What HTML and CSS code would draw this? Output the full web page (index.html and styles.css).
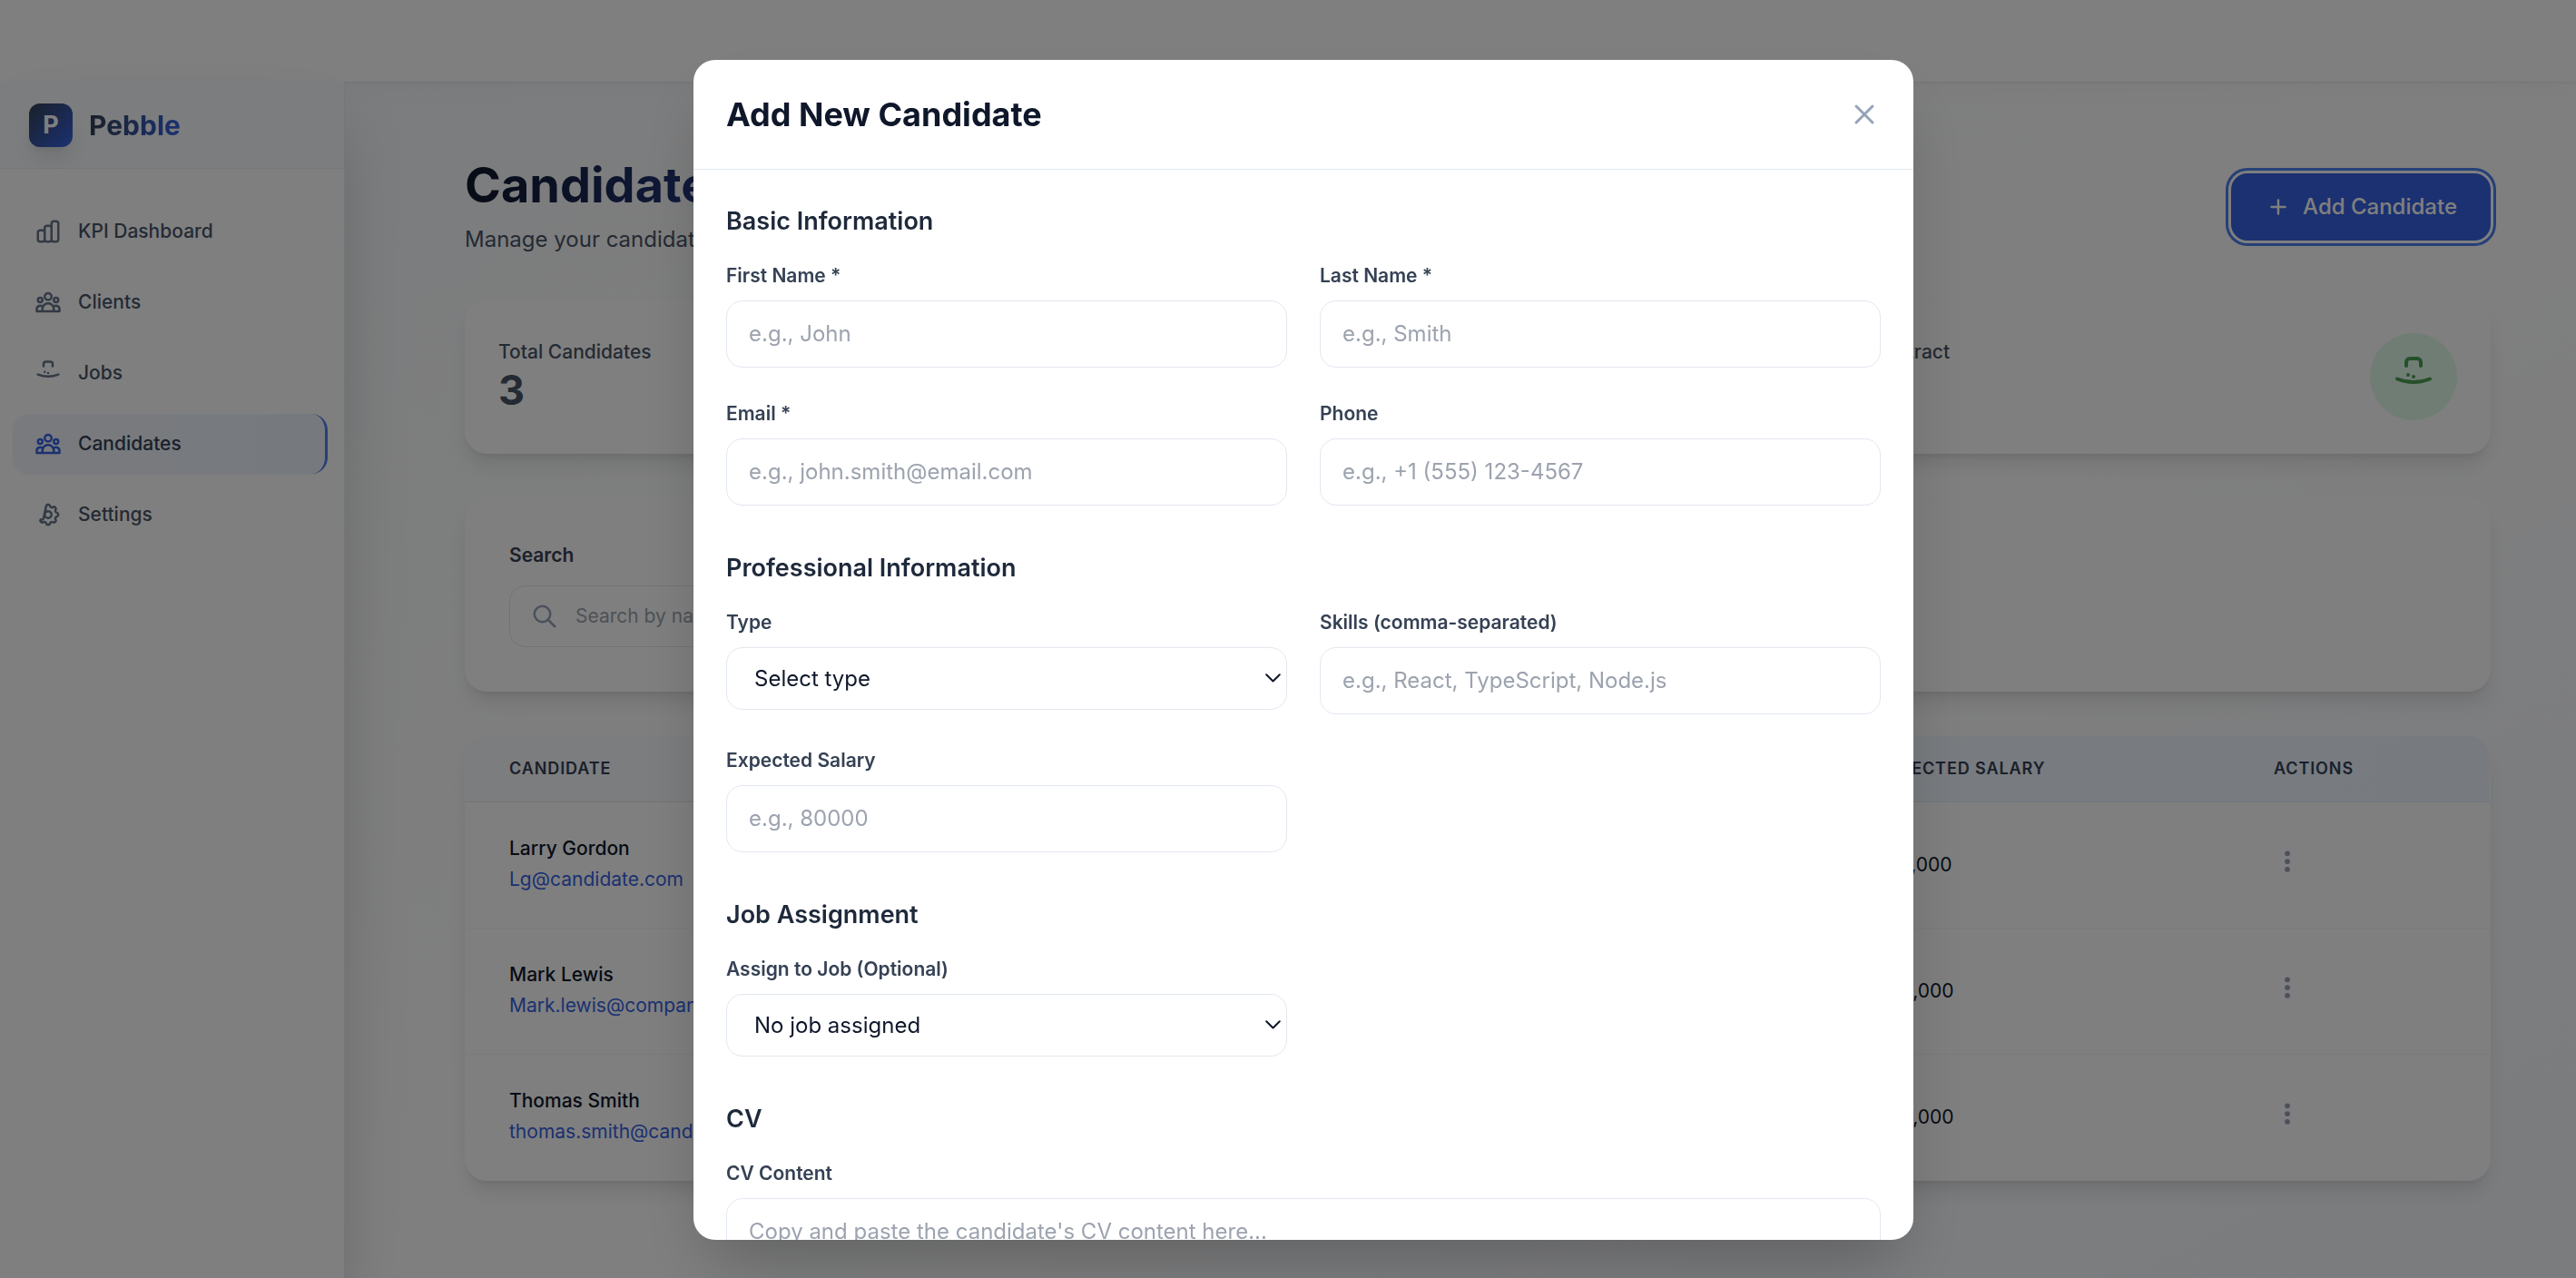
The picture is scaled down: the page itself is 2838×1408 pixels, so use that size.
FILE: index.html
```
<!DOCTYPE html>
<html lang="en">
<head>
  <meta charset="UTF-8">
  <meta name="viewport" content="width=device-width, initial-scale=1.0">
  <title>Pebble - Candidates</title>
  <link rel="stylesheet" href="styles.css">
</head>
<body>
  <header class="topbar"></header>

  <div class="layout">
    <aside class="sidebar">
      <div class="brand">
        <div class="brand-logo">P</div>
        <span class="brand-name">Pebble</span>
      </div>
      <nav class="nav">
        <a class="nav-item">
          <svg class="icon" viewBox="0 0 24 24"><path d="M9 19v-6a2 2 0 00-2-2H5a2 2 0 00-2 2v6a2 2 0 002 2h2a2 2 0 002-2zm0 0V9a2 2 0 012-2h2a2 2 0 012 2v10m-6 0a2 2 0 002 2h2a2 2 0 002-2m0 0V5a2 2 0 012-2h2a2 2 0 012 2v14a2 2 0 01-2 2h-2a2 2 0 01-2-2z"/></svg>
          KPI Dashboard
        </a>
        <a class="nav-item">
          <svg class="icon" viewBox="0 0 24 24"><path d="M17 20h5v-2a3 3 0 00-5.356-1.857M17 20H7m10 0v-2c0-.656-.126-1.283-.356-1.857M7 20H2v-2a3 3 0 015.356-1.857M7 20v-2c0-.656.126-1.283.356-1.857m0 0a5.002 5.002 0 019.288 0M15 7a3 3 0 11-6 0 3 3 0 016 0zm6 3a2 2 0 11-4 0 2 2 0 014 0zM7 10a2 2 0 11-4 0 2 2 0 014 0z"/></svg>
          Clients
        </a>
        <a class="nav-item">
          <svg class="icon" viewBox="0 0 24 24"><path d="M21 13.255A23.931 23.931 0 0112 15c-3.183 0-6.22-.62-9-1.745M16 6V4a2 2 0 00-2-2h-4a2 2 0 00-2 2v2m4 6h.01M9 11h.01"/></svg>
          Jobs
        </a>
        <a class="nav-item active">
          <svg class="icon" viewBox="0 0 24 24"><path d="M17 20h5v-2a3 3 0 00-5.356-1.857M17 20H7m10 0v-2c0-.656-.126-1.283-.356-1.857M7 20H2v-2a3 3 0 015.356-1.857M7 20v-2c0-.656.126-1.283.356-1.857m0 0a5.002 5.002 0 019.288 0M15 7a3 3 0 11-6 0 3 3 0 016 0zm6 3a2 2 0 11-4 0 2 2 0 014 0zM7 10a2 2 0 11-4 0 2 2 0 014 0z"/></svg>
          Candidates
        </a>
        <a class="nav-item">
          <svg class="icon" viewBox="0 0 24 24"><path d="M10.325 4.317c.426-1.756 2.924-1.756 3.35 0a1.724 1.724 0 002.573 1.066c1.543-.94 3.31.826 2.37 2.37a1.724 1.724 0 001.065 2.572c1.756.426 1.756 2.924 0 3.35a1.724 1.724 0 00-1.066 2.573c.94 1.543-.826 3.31-2.37 2.37a1.724 1.724 0 00-2.572 1.065c-.426 1.756-2.924 1.756-3.35 0a1.724 1.724 0 00-2.573-1.066c-1.543.94-3.31-.826-2.37-2.37a1.724 1.724 0 002.572-1.065z"/><path d="M15 12a3 3 0 11-6 0 3 3 0 016 0z"/></svg>
          Settings
        </a>
      </nav>
    </aside>

    <main class="main">
      <div class="page-header">
        <div>
          <h1 class="page-title">Candidates</h1>
          <p class="page-subtitle">Manage your candidate pipeline and assignments</p>
        </div>
        <button type="button" class="add-button">
          <svg class="icon" viewBox="0 0 24 24"><path d="M12 6v12M6 12h12"/></svg>
          Add Candidate
        </button>
      </div>

      <div class="stats">
        <div class="card stat">
          <div>
            <div class="stat-label">Total Candidates</div>
            <div class="stat-value">3</div>
          </div>
        </div>
        <div class="card stat">
          <div>
            <div class="stat-label">Permanent</div>
            <div class="stat-value">2</div>
          </div>
        </div>
        <div class="card stat">
          <div>
            <div class="stat-label">Contract</div>
            <div class="stat-value">1</div>
          </div>
          <div class="stat-icon">
            <svg viewBox="0 0 24 24"><path d="M21 13.255A23.931 23.931 0 0112 15c-3.183 0-6.22-.62-9-1.745M16 6V4a2 2 0 00-2-2h-4a2 2 0 00-2 2v2m4 6h.01M9 11h.01"/></svg>
          </div>
        </div>
      </div>

      <div class="card filters">
        <div class="filter-label">Search</div>
        <div class="search-box">
          <svg class="icon" viewBox="0 0 24 24"><path d="M21 21l-6-6m2-5a7 7 0 11-14 0 7 7 0 0114 0z"/></svg>
          <span>Search by name, email, or skills...</span>
        </div>
      </div>

      <div class="card table-card">
        <div class="row head">
          <div>Candidate</div>
          <div>Expected Salary</div>
          <div>Actions</div>
        </div>
        <div class="row">
          <div>
            <div class="name">Larry Gordon</div>
            <div class="email">Lg@candidate.com</div>
          </div>
          <div class="salary">$75,000</div>
          <div class="dots"><svg class="icon" viewBox="0 0 24 24"><path d="M12 5v.01M12 12v.01M12 19v.01M12 6a1 1 0 110-2 1 1 0 010 2zm0 7a1 1 0 110-2 1 1 0 010 2zm0 7a1 1 0 110-2 1 1 0 010 2z"/></svg></div>
        </div>
        <div class="row">
          <div>
            <div class="name">Mark Lewis</div>
            <div class="email">Mark.lewis@company.com</div>
          </div>
          <div class="salary">$80,000</div>
          <div class="dots"><svg class="icon" viewBox="0 0 24 24"><path d="M12 5v.01M12 12v.01M12 19v.01M12 6a1 1 0 110-2 1 1 0 010 2zm0 7a1 1 0 110-2 1 1 0 010 2zm0 7a1 1 0 110-2 1 1 0 010 2z"/></svg></div>
        </div>
        <div class="row">
          <div>
            <div class="name">Thomas Smith</div>
            <div class="email">thomas.smith@candidate.com</div>
          </div>
          <div class="salary">$90,000</div>
          <div class="dots"><svg class="icon" viewBox="0 0 24 24"><path d="M12 5v.01M12 12v.01M12 19v.01M12 6a1 1 0 110-2 1 1 0 010 2zm0 7a1 1 0 110-2 1 1 0 010 2zm0 7a1 1 0 110-2 1 1 0 010 2z"/></svg></div>
        </div>
      </div>
    </main>
  </div>

  <div class="overlay">
    <div class="modal">
      <div class="modal-header">
        <h2 class="modal-title">Add New Candidate</h2>
        <svg class="close" viewBox="0 0 24 24"><path d="M6 18L18 6M6 6l12 12"/></svg>
      </div>
      <form class="modal-body">
        <section>
          <h3>Basic Information</h3>
          <div class="fields">
            <label>First Name *<input type="text" placeholder="e.g., John"></label>
            <label>Last Name *<input type="text" placeholder="e.g., Smith"></label>
            <label>Email *<input type="text" placeholder="e.g., john.smith@email.com"></label>
            <label>Phone<input type="text" placeholder="e.g., +1 (555) 123-4567"></label>
          </div>
        </section>
        <section>
          <h3>Professional Information</h3>
          <div class="fields">
            <label>Type
              <span class="select-wrap">
                <select><option>Select type</option></select>
                <svg viewBox="0 0 17 10"><path d="M1.2 1.2l7.3 7.3 7.3-7.3"/></svg>
              </span>
            </label>
            <label>Skills (comma-separated)<input type="text" placeholder="e.g., React, TypeScript, Node.js"></label>
            <label>Expected Salary<input type="text" placeholder="e.g., 80000"></label>
          </div>
        </section>
        <section>
          <h3>Job Assignment</h3>
          <div class="fields">
            <label>Assign to Job (Optional)
              <span class="select-wrap">
                <select><option>No job assigned</option></select>
                <svg viewBox="0 0 17 10"><path d="M1.2 1.2l7.3 7.3 7.3-7.3"/></svg>
              </span>
            </label>
          </div>
        </section>
        <section>
          <h3>CV</h3>
          <label>CV Content<textarea rows="6" placeholder="Copy and paste the candidate's CV content here..."></textarea></label>
        </section>
      </form>
    </div>
  </div>
</body>
</html>
```
FILE: styles.css
```
* {
  box-sizing: border-box;
}

body {
  margin: 0;
  height: 1408px;
  overflow: hidden;
  font-family: Inter, "Liberation Sans", sans-serif;
  font-size: 24px;
  line-height: 36px;
  color: #0f172a;
  background: #fff;
}

h1, h2, h3, p {
  margin: 0;
}

svg {
  fill: none;
  stroke: currentColor;
  stroke-width: 2;
  stroke-linecap: round;
  stroke-linejoin: round;
  flex-shrink: 0;
}

.icon {
  width: 30px;
  height: 30px;
}

/* Top bar */
.topbar {
  position: relative;
  z-index: 1;
  height: 90px;
  background: #fff;
  box-shadow: 0 1px 3px rgba(0, 0, 0, 0.08), 0 6px 30px rgba(0, 0, 0, 0.03);
}

.layout {
  display: flex;
  height: 1342px;
}

/* Sidebar */
.sidebar {
  position: relative;
  z-index: 2;
  width: 380px;
  flex-shrink: 0;
  background: #fff;
  border-right: 1px solid #e9eef4;
  box-shadow: 0 37px 75px -18px rgba(0, 0, 0, 0.25);
}

.brand {
  display: flex;
  align-items: center;
  gap: 18px;
  height: 96px;
  padding: 0 32px;
  border-bottom: 1px solid #ebeff4;
  background: linear-gradient(to right, #f8fafc, #f9fafc);
}

.brand-logo {
  width: 48px;
  height: 48px;
  border-radius: 12px;
  background: linear-gradient(to bottom right, #354154, #3662e3);
  box-shadow: 0 15px 22px -4px rgba(0, 0, 0, 0.1), 0 6px 9px -6px rgba(0, 0, 0, 0.1);
  color: #fff;
  font-size: 27px;
  font-weight: 700;
  line-height: 47px;
  text-align: center;
}

.brand-name {
  font-size: 30px;
  font-weight: 700;
  background: linear-gradient(to right, #354154, #3662e3);
  background-clip: text;
  -webkit-background-clip: text;
  color: transparent;
}

.nav {
  display: flex;
  flex-direction: column;
  gap: 12px;
  padding: 36px 18px 36px 14px;
}

.nav-item {
  display: flex;
  align-items: center;
  gap: 18px;
  height: 66px;
  padding: 0 24px;
  border-radius: 18px;
  color: #485568;
  font-size: 21px;
  font-weight: 500;
}

.nav-item .icon {
  color: #66748a;
}

.nav-item.active {
  color: #354154;
  background: linear-gradient(to right, #f3f5fb, #ecf4ff);
  border-right: 3px solid #4c80ee;
  box-shadow: 0 1px 3px rgba(0, 0, 0, 0.05);
}

.nav-item.active .icon {
  color: #3662e3;
}

/* Page */
.main {
  flex: 1;
  padding: 83px 94px 0 132px;
  background: linear-gradient(to bottom right, #f8fafc, #fff 50%, #f5f8fd);
}

.page-header {
  display: flex;
  justify-content: space-between;
  align-items: center;
  height: 109px;
  margin-bottom: 48px;
}

.page-title {
  width: fit-content;
  font-size: 54px;
  line-height: 60px;
  font-weight: 700;
  background: linear-gradient(to right, #0f172a, #253a85);
  background-clip: text;
  -webkit-background-clip: text;
  color: transparent;
}

.page-subtitle {
  margin-top: 12px;
  color: #485568;
}

.add-button {
  display: flex;
  align-items: center;
  gap: 12px;
  height: 74px;
  padding: 0 37px;
  border: none;
  border-radius: 18px;
  background: #3662e3;
  box-shadow: 0 0 0 3px #fff, 0 0 0 6px #4c80ee;
  color: #fff;
  font-family: inherit;
  font-size: 24px;
  font-weight: 500;
}

.card {
  background: #fff;
  border: 1px solid #fcfcfd;
  border-radius: 24px;
  box-shadow: 0 15px 22px -4px rgba(0, 0, 0, 0.1), 0 6px 9px -6px rgba(0, 0, 0, 0.1);
}

.stats {
  display: grid;
  grid-template-columns: repeat(3, 1fr);
  gap: 36px;
  margin-bottom: 48px;
}

.stat {
  display: flex;
  justify-content: space-between;
  align-items: center;
  height: 170px;
  padding: 0 36px;
}

.stat-label {
  color: #485568;
  font-size: 21px;
  font-weight: 500;
  line-height: 30px;
}

.stat-value {
  color: #485568;
  font-size: 45px;
  font-weight: 700;
  line-height: 54px;
}

.stat-icon {
  display: flex;
  align-items: center;
  justify-content: center;
  width: 96px;
  height: 96px;
  border-radius: 50%;
  background: #e0fae8;
  color: #4ca155;
}

.stat-icon svg {
  width: 48px;
  height: 48px;
}

.filters {
  height: 214px;
  padding: 48px;
  margin-bottom: 48px;
}

.filter-label {
  margin-bottom: 18px;
  color: #354154;
  font-size: 21px;
  font-weight: 600;
  line-height: 30px;
}

.search-box {
  display: flex;
  align-items: center;
  gap: 19px;
  width: 660px;
  height: 68px;
  padding-left: 23px;
  border: 1px solid #e5e7eb;
  border-radius: 18px;
  color: #9ca3af;
  font-size: 21px;
}

.search-box .icon {
  color: #94a3b8;
}

/* Candidate table */
.table-card {
  overflow: hidden;
}

.row {
  display: grid;
  grid-template-columns: 1507px 437px 1fr;
  height: 139px;
  padding: 36px 0 0 48px;
  border-bottom: 1px solid #f1f5f9;
  font-size: 21px;
  line-height: 30px;
}

.row:last-child {
  height: 138px;
  border-bottom: none;
}

.row.head {
  height: 73px;
  padding-top: 24px;
  border-bottom: 1px solid #e2e8f0;
  background: linear-gradient(to right, #f8fafc, #eff6ff);
  color: #354154;
  font-size: 18px;
  font-weight: 600;
  line-height: 24px;
  letter-spacing: 0.9px;
  text-transform: uppercase;
}

.name {
  font-weight: 500;
}

.email {
  margin-top: 4px;
  color: #3662e3;
}

.salary {
  padding-top: 18px;
}

.dots {
  padding-top: 14px;
  color: #94a3b8;
}

.dots .icon {
  stroke-width: 2.6;
}

/* Modal */
.overlay {
  position: fixed;
  inset: 0 -34px -24px 0;
  z-index: 10;
  display: flex;
  align-items: center;
  justify-content: center;
  background: rgba(0, 0, 0, 0.5);
}

.modal {
  width: 1344px;
  height: 1300px;
  overflow: hidden;
  border-radius: 24px;
  background: #fff;
  box-shadow: 0 37px 75px -18px rgba(0, 0, 0, 0.25);
}

.modal-header {
  display: flex;
  justify-content: space-between;
  align-items: center;
  height: 121px;
  padding: 0 36px;
  border-bottom: 1px solid #e2e8f0;
}

.modal-title {
  font-size: 36px;
  font-weight: 700;
  line-height: 48px;
}

.close {
  width: 36px;
  height: 36px;
  color: #94a3b8;
}

.modal-body {
  display: flex;
  flex-direction: column;
  gap: 48px;
  padding: 36px;
}

.modal-body h3 {
  margin-bottom: 24px;
  color: #1e293b;
  font-size: 27px;
  font-weight: 600;
  line-height: 42px;
}

.fields {
  display: grid;
  grid-template-columns: 1fr 1fr;
  gap: 36px;
  align-items: start;
}

.modal-body label {
  display: block;
  color: #354154;
  font-size: 21px;
  font-weight: 600;
  line-height: 30px;
}

.modal-body input,
.modal-body select,
.modal-body textarea {
  display: block;
  width: 100%;
  height: 74px;
  margin-top: 12px;
  padding: 17px 24px 19px;
  border: 1px solid #e2e8f0;
  border-radius: 18px;
  background: #fff;
  color: #0f172a;
  font-family: inherit;
  font-size: 24px;
  font-weight: 400;
  line-height: 36px;
}

.modal-body textarea {
  height: 254px;
  padding-top: 18px;
  resize: none;
}

.modal-body ::placeholder {
  color: #9ca3af;
  opacity: 1;
}

.select-wrap {
  display: block;
  position: relative;
}

.modal-body select {
  appearance: none;
  height: 69px;
  padding: 0 30px;
}

.select-wrap svg {
  position: absolute;
  top: 29px;
  right: 7px;
  width: 17px;
  height: 10px;
  color: #0f172a;
}
```
